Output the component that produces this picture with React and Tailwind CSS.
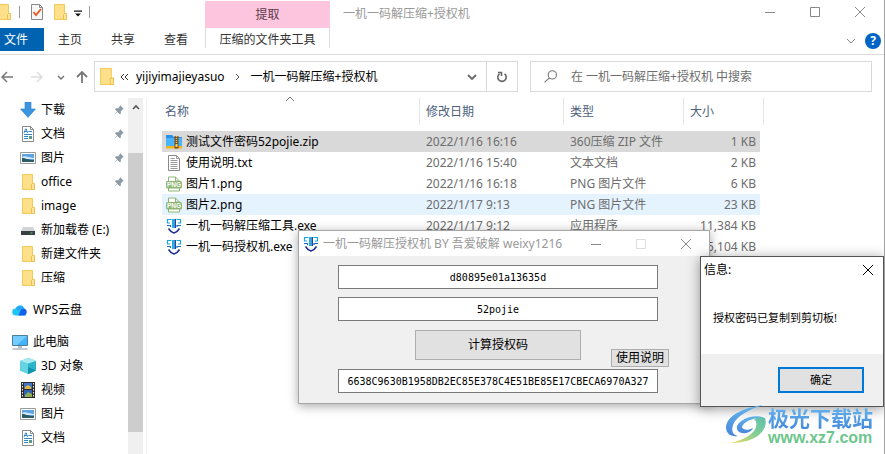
import React, { useState } from 'react';

const quickAccess = [
    { name: '下载', icon: 'download', pinned: true },
    { name: '文档', icon: 'document', pinned: true },
    { name: '图片', icon: 'picture', pinned: true },
    { name: 'office', icon: 'folder', pinned: true },
    { name: 'image', icon: 'folder' },
    { name: '新加载卷 (E:)', icon: 'drive' },
    { name: '新建文件夹', icon: 'folder' },
    { name: '压缩', icon: 'folder' },
];

const thisPc = [
    { name: '3D 对象', icon: 'cube' },
    { name: '视频', icon: 'video' },
    { name: '图片', icon: 'picture' },
    { name: '文档', icon: 'document' },
];

const files = [
    { name: '测试文件密码52pojie.zip', icon: 'zip', date: '2022/1/16 16:16', type: '360压缩 ZIP 文件', size: '1 KB', row: 'bg-[#d9d9d9]' },
    { name: '使用说明.txt', icon: 'text', date: '2022/1/16 15:40', type: '文本文档', size: '2 KB', row: '' },
    { name: '图片1.png', icon: 'png', date: '2022/1/16 16:18', type: 'PNG 图片文件', size: '6 KB', row: '' },
    { name: '图片2.png', icon: 'png', date: '2022/1/17 9:13', type: 'PNG 图片文件', size: '23 KB', row: 'bg-[#e5f3ff]' },
    { name: '一机一码解压缩工具.exe', icon: 'app', date: '2022/1/17 9:12', type: '应用程序', size: '11,384 KB', row: '' },
    { name: '一机一码授权机.exe', icon: 'app', date: '', type: '', size: '5,104 KB', row: '' },
];

const shapes = {
    folder: (
        <>
            <path d="M2.5.5h10v15h-10z" fill="#ffe08a" stroke="#f2cb57" />
            <path d="M12.5 9.5h2v6h-3v-5z" fill="#ffe59b" stroke="#eec04a" />
        </>
    ),
    download: <path d="M5 0h6v7h4.5L8 15.5.5 7H5z" fill="#3a96e0" stroke="#2b7fc6" strokeWidth=".6" />,
    document: (
        <>
            <path d="M2.5.5h8l3 3v12h-11z" fill="#fff" stroke="#8a8a8a" />
            <path d="M10.5.5v3h3" fill="none" stroke="#8a8a8a" />
            <path d="M4 7l1.5-4h.8L7.5 7M4.5 5.5h2.5M8.5 5.5h3.5M4 8.500h8M4 10.500h4M4 12.500h4" fill="none" stroke="#2f86c4" />
            <path d="M9 10h3v3H9z" fill="#5b9a8a" />
        </>
    ),
    picture: (
        <>
            <path d="M.5 2.500h15v11H.5z" fill="#fff" stroke="#9a9a9a" />
            <path d="M2 4h12v8H2z" fill="#5da3e2" />
            <path d="M2 7c3-2 5 0 12 1v1H2z" fill="#d6ebf7" />
            <path d="M2 8c4 0 6 2 12 2v2H2z" fill="#2c5c64" />
        </>
    ),
    drive: (
        <>
            <path d="M3 5h10l2 4H1z" fill="#d2d4d6" />
            <path d="M1 9h14v4H1z" fill="#3b3e42" />
            <path d="M10.500 10.500h2v1h-2z" fill="#44e35c" />
        </>
    ),
    cloud: (
        <>
            <path d="M4 13.500a3.500 3.500 0 0 1-.5-7A5 5 0 0 1 11 4l3 9.500z" fill="#1fc6f4" />
            <path d="M6 13.500C8 12 8 5.500 12 6.500a3.600 3.600 0 0 1 0 7z" fill="#1560e8" />
            <path d="M4 6.500A5 5 0 0 1 12.500 6.500C9 6 8 9 6 8.500z" fill="#28a4f5" />
        </>
    ),
    computer: (
        <>
            <path d="M.5 1.500h15v10H.5z" fill="#44b4fa" stroke="#4a7da0" />
            <path d="M1 2h14L5 11H1z" fill="#74ccff" />
            <path d="M6 12h4v2H6z" fill="#b5c1c9" />
            <path d="M.5 15h15" stroke="#8296a3" />
        </>
    ),
    cube: (
        <>
            <path d="M0 3l9-3 7 3v9.500L8.500 16 0 12.500z" fill="#2bb3ca" />
            <path d="M0 3l8 2.500V16L0 12.500z" fill="#65d4e2" />
            <path d="M0 3l9-3 7 3-8 2.500z" fill="#a5ebf1" />
            <path d="M8 9l8 3.500L8.500 16H8z" fill="#1192ad" />
        </>
    ),
    video: (
        <>
            <path d="M1 0h14v16H1z" fill="#2b2b2b" />
            <path d="M4 1h8v6H4z" fill="#3f74c8" />
            <path d="M4 8h8v7H4z" fill="#2f62b3" />
            <path d="M5 5l3-2 3 2v2H5z" fill="#e5b73b" />
            <path d="M5 13l3-3 4 2v3H5z" fill="#8fae4f" />
            <path d="M2.500 1v15M13.500 1v15" stroke="#f0f0f0" strokeDasharray="1.500 1.500" />
        </>
    ),
    zip: (
        <>
            <path d="M0 1h6l2 2h8v10H0z" fill="#2a8fe5" />
            <path d="M0 4h16v8H0z" fill="#49b5fa" />
            <path d="M0 12h16v2.500H0z" fill="#f2b320" />
            <path d="M8.500 2h4v12.500h-4z" fill="#7a4a19" />
            <path d="M10.500 2v8" stroke="#f4cf66" strokeWidth="1.500" strokeDasharray="1 1" />
            <path d="M9.500 10h2v3h-2z" fill="#ffd75a" />
        </>
    ),
    text: (
        <>
            <path d="M2.500.5h8l3 3v12h-11z" fill="#fff" stroke="#888" />
            <path d="M10.500.5v3h3M4.500 3.500h4M4.500 5.500h7M4.500 7.500h7M4.500 9.500h7M4.500 11.500h7M4.500 13.500h7" fill="none" stroke="#999" />
        </>
    ),
    png: (
        <>
            <path d="M2.500 5V1h7l4 4M2.500 12v3h11v-3M9.500 1v4h4" fill="#fff" stroke="#8db674" />
            <rect x="0" y="5" width="16" height="7.500" rx="1.500" fill="#8db674" />
            <text x="8" y="11" textAnchor="middle" fontSize="6.500" fontWeight="700" fontFamily="Liberation Sans, sans-serif" fill="#fff">PNG</text>
        </>
    ),
    app: (
        <>
            <path d="M5.500 1.500h-4v3.500H4M10.500 1.500h4V5H12" fill="none" stroke="#18a5e4" strokeWidth="1.200" />
            <path d="M6 1h2.500v9H6z" fill="#27aeea" />
            <path d="M8.500 1H10v9H8.500z" fill="#174a9c" />
            <path d="M1 7.500h3.500V9M15 7.500h-4V9" fill="none" stroke="#1a6fc0" strokeWidth="1.200" />
            <path d="M2.500 10.500C4 13 6 14.500 8 15c2-.5 4-2 5.500-4.500" fill="none" stroke="#1c2f93" strokeWidth="1.500" />
        </>
    ),
    pin: <path d="M9.500 1.500l5 5-1.500.500-2.500 2.500v3L9 13.500 6 10.500 1.500 14.500 5.500 10 2.500 7 4 5.500h3L9 3z" fill="#8d99a3" />,
};

const Icon = ({ name, className = 'size-4' }) => (
    <svg viewBox="0 0 16 16" className={`${className} shrink-0`} aria-hidden="true">{shapes[name]}</svg>
);

const Stroke = ({ d, className }) => (
    <svg viewBox="0 0 12 12" className={`${className} shrink-0`} fill="none" stroke="currentColor" aria-hidden="true">
        <path d={d} />
    </svg>
);

const WindowButtons = ({ className, maxClass = '' }) => (
    <div className={`flex items-center gap-[33px] ${className}`}>
        <button aria-label="最小化"><Stroke d="M1 6.500h10" className="size-3" /></button>
        <button aria-label="最大化" className={maxClass}><Stroke d="M1.500 1.500h9v9h-9z" className="size-3" /></button>
        <button aria-label="关闭"><Stroke d="M1 1l10 10M11 1L1 11" className="size-3" /></button>
    </div>
);

const SideItem = ({ item }) => (
    <li>
        <a href="#" className="flex h-6 items-center gap-[5px] pl-5 pr-[3px]">
            <Icon name={item.icon} />
            <span className="flex-1 whitespace-nowrap">{item.name}</span>
            {item.pinned && <Icon name="pin" className="size-3" />}
        </a>
    </li>
);

const TitleBar = () => (
    <div className="flex h-7 items-center">
        <div className="flex w-[205px] items-center pb-1">
            <Icon name="folder" className="-ml-1 size-4" />
            <span className="ml-[7px] h-3 w-px bg-[#999]" />
            <svg viewBox="0 0 16 16" className="ml-[9px] size-4" aria-hidden="true">
                <path d="M2.500.5h8l3 3v12h-11z" fill="#f7f7f7" stroke="#888" />
                <path d="M10.500.5v3h3" fill="none" stroke="#888" />
                <path d="M4.500 8l2.500 3 5-6" fill="none" stroke="#e8591c" strokeWidth="1.800" />
            </svg>
            <Icon name="folder" className="ml-[7px] size-4" />
            <svg viewBox="0 0 8 8" className="ml-[6px] mt-1 size-2" aria-hidden="true">
                <path d="M0 .5h8v1.200H0zM1 3.500h6L4 6.500z" fill="#111" />
            </svg>
            <span className="ml-[7px] h-3 w-px bg-[#999]" />
        </div>
        <div className="mt-px flex w-[125px] items-center justify-center self-stretch bg-[#fdc5de] text-[#5b3a49]">提取</div>
        <h1 className="ml-[13px] flex-1 text-[#999]">一机一码解压缩+授权机</h1>
        <WindowButtons className="pr-[18px] pb-1 text-[#888]" />
    </div>
);

const Ribbon = () => (
    <nav className="flex h-[27px] items-start border-b border-[#d9dadb] text-[#333]">
        <button className="h-[23px] w-11 bg-[#0063b1] pr-3 text-white">文件</button>
        <div className="flex h-6 w-[161px] items-center gap-[29px] pl-[14px]">
            <button>主页</button>
            <button>共享</button>
            <button>查看</button>
        </div>
        <button className="h-5 w-[125px] border-x border-[#dcdcdc] pt-1">压缩的文件夹工具</button>
        <div className="flex h-[26px] flex-1 items-center justify-end gap-[8px] pr-[3px]">
            <button aria-label="展开功能区" className="text-[#888]"><Stroke d="M2 4l4 4 4-4" className="size-3" /></button>
            <button aria-label="帮助" className="size-4 rounded-full bg-[#0063c6] text-xs leading-4 font-bold text-white">?</button>
        </div>
    </nav>
);

const AddressBar = () => (
    <div className="flex h-[43px] items-center pr-[12px] pl-px text-[#777]">
        <button aria-label="后退"><Stroke d="M12 6H1M6 1L1 6l5 5" className="size-3 stroke-[1.500]" /></button>
        <button aria-label="前进" className="ml-[18px] text-[#ddd]"><Stroke d="M0 6h11M6 1l5 5-5 5" className="size-3 stroke-[1.500]" /></button>
        <button aria-label="最近位置" className="ml-[12px]"><Stroke d="M3 5l3 3 3-3" className="size-3 stroke-[1.500]" /></button>
        <button aria-label="上移" className="ml-[9px]"><Stroke d="M6 12V1M1 6l5-5 5 5" className="size-3 stroke-[1.800]" /></button>
        <div className="ml-[6px] flex h-[31px] flex-1 items-center border border-[#d9d9d9] pl-[3px] text-black">
            <Icon name="folder" className="size-[17px]" />
            <Stroke d="M5 3L2 6l3 3M9 3L6 6l3 3" className="ml-[4px] size-3 text-[#333]" />
            <span className="ml-[5px]">yijiyimajieyasuo</span>
            <Stroke d="M4 3l3 3-3 3" className="mx-[7px] size-3 text-[#555]" />
            <span className="flex-1 whitespace-nowrap">一机一码解压缩+授权机</span>
            <button aria-label="历史记录" className="mr-[8px] text-[#666]"><Stroke d="M2 4l4 4 4-4" className="size-3 stroke-[1.800]" /></button>
            <button aria-label="刷新" className="flex h-full w-[31px] items-center justify-center border-l border-[#d9d9d9] text-[#666]">
                <Stroke d="M8.500 2.800A4.200 4.200 0 1 1 3.500 2.800M2 1.500h3.500V5" className="size-3 stroke-[1.600]" />
            </button>
        </div>
        <label className="ml-[12px] flex h-[31px] w-[342px] items-center border border-[#d9d9d9] pl-[13px]">
            <Stroke d="M11.500 4.500a3.800 3.800 0 1 1-7.600 0 3.800 3.800 0 1 1 7.600 0zM5 7.200L.500 11.500" className="size-[13px]" />
            <input type="search" aria-label="搜索" placeholder="在 一机一码解压缩+授权机 中搜索" className="ml-[14px] min-w-0 flex-1 outline-none placeholder:text-[#6d6d6d]" />
        </label>
    </div>
);

const Sidebar = () => (
    <aside className="flex w-[147px] shrink-0 border-r border-[#f0f0f0] pr-[3px]">
        <div className="w-32">
            <ul>{quickAccess.map((item) => <SideItem key={item.name} item={item} />)}</ul>
            <a href="#" className="my-2 flex h-6 items-center gap-[5px] pl-3"><Icon name="cloud" />WPS云盘</a>
            <a href="#" className="flex h-6 items-center gap-[5px] pl-3"><Icon name="computer" />此电脑</a>
            <ul>{thisPc.map((item) => <SideItem key={item.name} item={item} />)}</ul>
        </div>
        <div className="flex w-[15px] flex-col bg-[#f0f0f0]">
            <button aria-label="向上滚动" className="flex h-[55px] items-start justify-center pt-[3px] text-[#555]">
                <Stroke d="M3 8l3-3 3 3" className="size-3 stroke-[1.600]" />
            </button>
            <div className="flex-1 bg-[#cdcdcd]" />
            <div className="h-[22px]" />
        </div>
    </aside>
);

const FileTable = () => (
    <main className="min-w-0 flex-1 pl-[15px]">
        <table className="w-[602px] table-fixed border-collapse text-left text-[#6d6d6d]">
            <colgroup>
                <col className="w-[258px]" />
                <col className="w-36" />
                <col className="w-[120px]" />
                <col className="w-[76px]" />
                <col className="w-1" />
            </colgroup>
            <thead className="text-[#4c607a]">
                <tr className="h-[33px] align-top">
                    <th className="p-0 font-normal">
                        <div className="relative flex h-[27px] items-center border-r border-[#e5e5e5] pl-[3px]">
                            名称
                            <Stroke d="M2 7l4-4 4 4" className="absolute -top-1 left-[122px] size-3 text-[#777]" />
                        </div>
                    </th>
                    <th className="p-0 font-normal"><div className="flex h-[27px] items-center border-r border-[#e5e5e5] pl-[6px]">修改日期</div></th>
                    <th className="p-0 font-normal"><div className="flex h-[27px] items-center border-r border-[#e5e5e5] pl-[6px]">类型</div></th>
                    <th colSpan={2} className="p-0 font-normal"><div className="flex h-[27px] items-center border-r border-[#e5e5e5] pl-[6px]">大小</div></th>
                </tr>
            </thead>
            <tbody>
                {files.map((file) => (
                    <tr key={file.name} className="h-[21px]">
                        <td className={`p-0 ${file.row}`}>
                            <div className="flex h-[21px] items-center gap-1 pl-1 whitespace-nowrap text-black">
                                <Icon name={file.icon} />
                                {file.name}
                            </div>
                        </td>
                        <td className={`p-0 pl-[6px] ${file.row}`}>{file.date}</td>
                        <td className={`p-0 pl-[6px] ${file.row}`}>{file.type}</td>
                        <td className={`p-0 pr-1 text-right whitespace-nowrap ${file.row}`}>{file.size}</td>
                    </tr>
                ))}
            </tbody>
        </table>
    </main>
);

const fieldClass = "h-6 w-full border border-[#7a7a7a] bg-white text-center font-['DejaVu_Sans_Mono',monospace] text-[10px] text-black outline-none";

const LicenseWindow = () => {
    const [machineCode, setMachineCode] = useState('d80895e01a13635d');
    const [password, setPassword] = useState('52pojie');
    const [licenseKey, setLicenseKey] = useState('6638C9630B1958DB2EC85E378C4E51BE85E17CBECA6970A327');

    return (
        <section className="absolute top-[230px] left-[298px] w-[412px] border border-[#a6a6a6] bg-[#f0f0f0] shadow-[0_2px_10px_rgba(0,0,0,0.35)]">
            <header className="flex h-[25px] items-center bg-white pl-1 text-[#999]">
                <Icon name="app" />
                <h2 className="ml-1 flex-1 whitespace-nowrap">一机一码解压授权机 BY 吾爱破解 weixy1216</h2>
                <WindowButtons className="pr-[17px] text-[#888]" maxClass="text-[#ddd]" />
            </header>
            <form className="pt-[9px] pr-[51px] pb-[10px] pl-[39px]" onSubmit={(e) => e.preventDefault()}>
                <input aria-label="机器码" className={fieldClass} value={machineCode} onChange={(e) => setMachineCode(e.target.value)} />
                <input aria-label="密码" className={`mt-2 ${fieldClass}`} value={password} onChange={(e) => setPassword(e.target.value)} />
                <div className="-mr-3 flex items-end pt-[9px] pb-[2px] pl-[77px]">
                    <button className="mb-[7px] h-[30px] w-[166px] border border-[#adadad] bg-[#e1e1e1]">计算授权码</button>
                    <button type="button" className="ml-[30px] h-[18px] w-[58px] border border-[#adadad] bg-[#e1e1e1] leading-4">使用说明</button>
                </div>
                <input aria-label="授权码" className={fieldClass} value={licenseKey} onChange={(e) => setLicenseKey(e.target.value)} />
            </form>
        </section>
    );
};

const MessageBox = () => (
    <section role="dialog" aria-label="信息" className="absolute top-[256px] right-0 w-[184px] border border-[#555] bg-white shadow-[0_2px_12px_rgba(0,0,0,0.4)]">
        <header className="flex h-[25px] items-center justify-between pr-[9px] pl-[3px]">
            <h2>信息:</h2>
            <button aria-label="关闭"><Stroke d="M1 1l10 10M11 1L1 11" className="size-3" /></button>
        </header>
        <p className="flex h-[72px] items-center pl-3 text-[11px] whitespace-nowrap">授权密码已复制到剪切板!</p>
        <footer className="flex h-[52px] items-center justify-end bg-[#f0f0f0] pr-[19px]">
            <button className="h-[26px] w-[86px] border-2 border-[#0078d7] bg-[#e1e1e1] text-[11px]">确定</button>
        </footer>
    </section>
);

const Watermark = () => (
    <div className="absolute top-[405px] right-[11px] flex items-start font-bold">
        <svg viewBox="0 0 42 40" className="h-10 w-[42px]" aria-hidden="true">
            <defs>
                <linearGradient id="swirl" x1="0" y1="0" x2="0" y2="1">
                    <stop offset="0" stopColor="#5db4ec" />
                    <stop offset="1" stopColor="#4a86dc" />
                </linearGradient>
                <linearGradient id="tail" x1="0" y1="1" x2="1" y2="0">
                    <stop offset="0" stopColor="#f6dc62" />
                    <stop offset=".5" stopColor="#86cf92" />
                    <stop offset="1" stopColor="#5cbfae" />
                </linearGradient>
            </defs>
            <path d="M37 0C22 2 1 9 0 22c0 7 5 10 12 9-5-1-7-5-5-11C10 11 24 4 37 0z" fill="url(#swirl)" />
            <path d="M39 13C28 8 14 14 11 21c-1 5 3 8 9 7 5-1 7-4 7-5-5 3-10 2-11-1 1-5 12-10 23-9z" fill="url(#swirl)" />
            <path d="M28 14c4-2 8-2 11-1 4 12-9 25-35 25 14-3 24-9 26-16 1-4 0-6-2-8z" fill="url(#tail)" />
        </svg>
        <div className="pt-px">
            <div className="bg-linear-to-b from-[#65b5ee] to-[#4387dc] bg-clip-text text-[21px] leading-6 text-transparent">极光下载站</div>
            <div className="font-['Liberation_Sans',sans-serif] text-base leading-4 text-[#6cc68c]">www.xz7.com</div>
        </div>
    </div>
);

const App = () => {
    return (
        <div className="relative flex h-screen flex-col overflow-hidden border-r border-[#a0a0a0] bg-white font-['Noto_Sans','Noto_Sans_CJK_SC',sans-serif] text-xs text-black">
            <TitleBar />
            <Ribbon />
            <AddressBar />
            <div className="flex min-h-0 flex-1">
                <Sidebar />
                <FileTable />
            </div>
            <LicenseWindow />
            <MessageBox />
            <Watermark />
        </div>
    );
};

export default App;
